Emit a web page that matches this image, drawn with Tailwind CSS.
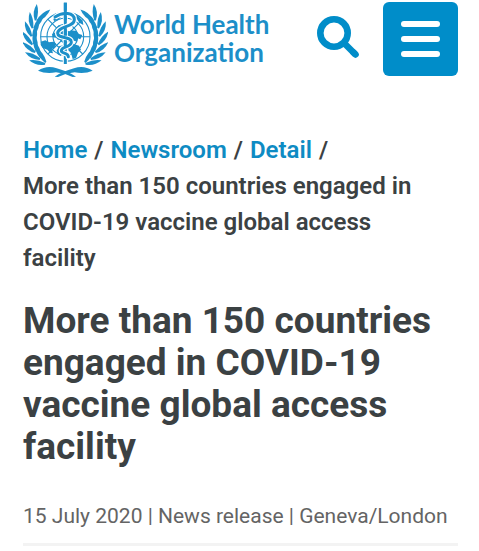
<!DOCTYPE html>
<html lang="en">
<head>
<meta charset="utf-8">
<meta name="viewport" content="width=device-width, initial-scale=1">
<title>More than 150 countries engaged in COVID-19 vaccine global access facility</title>
<script src="https://cdn.jsdelivr.net/npm/@tailwindcss/browser@4"></script>
</head>
<body class="bg-white font-['Roboto',sans-serif] text-[#3b4143]">
<header class="flex items-start pl-[23px] pr-[21px] pt-0.5">
  <a href="#" class="flex items-start gap-1.5 text-[#1c8fc9]">
    <svg class="h-[75px] w-[85px] shrink-0" viewBox="23 5 255 225" fill="none" stroke="currentColor" aria-hidden="true">
      <defs>
        <g id="leaf" fill="currentColor" stroke="none">
          <path d="M47 122Q25 106 24 78Q43 92 51 119Z"/>
          <path d="M51 119Q49 88 66 68Q72 94 56 119Z"/>
        </g>
        <g id="branch">
          <use href="#leaf" transform="rotate(35 150 109)"/>
          <use href="#leaf" transform="rotate(21 150 109)"/>
          <use href="#leaf" transform="rotate(7 150 109)"/>
          <use href="#leaf" transform="rotate(-7 150 109)"/>
          <use href="#leaf" transform="rotate(-21 150 109)"/>
          <use href="#leaf" transform="rotate(-35 150 109)"/>
          <use href="#leaf" transform="rotate(-47 150 109)"/>
          <path fill="currentColor" stroke="none" d="M68 211Q95 193 124 204Q158 213 182 229L172 230Q148 218 122 216Q92 222 68 211Z"/>
        </g>
      </defs>
      <use href="#branch"/>
      <use href="#branch" transform="translate(300 0) scale(-1 1)"/>
      <g stroke-width="3.2">
        <circle cx="150" cy="109" r="74"/>
        <circle cx="150" cy="109" r="55"/>
        <circle cx="150" cy="109" r="37"/>
        <circle cx="150" cy="109" r="18"/>
        <path d="M76 109H224M98 57L202 161M98 161L202 57"/>
      </g>
      <g fill="currentColor" stroke="none">
        <path d="M76 124l14-4 10 6 14-2 9 7-6 11-8 4 4 13-9-2-8-9-14-5-6-9z"/>
        <path d="M110 101l12-6 8 3 6-12-12-4 7-8 12 7 4 20-3 18-16-1-6-6-10-2z"/>
        <path d="M157 96l11-6 15 2 8 9 10 3-6 13-8-3-2 10-9-3-7 8-13-6z"/>
        <path d="M160 138l15-7 16 5 6 12-9 9-6 17-10 2-5-18-8-8z"/>
        <path d="M131 138l12-3 1 21-8 11-9-5-3-11z"/>
        <path d="M114 56l20-17 8 2-12 18-14 3z"/>
        <path d="M183 41l19 20 2 13-12-7-9-14z"/>
      </g>
      <path stroke="#fff" stroke-width="15" d="M150 10V191"/>
      <path stroke-width="9" d="M150 7V191"/>
      <g stroke-linecap="round">
        <path stroke="#fff" stroke-width="16" d="M123 48C143 33 177 37 177 58C177 81 127 77 127 99C127 116 168 107 168 125C168 142 138 137 138 151C138 160 159 157 159 169"/>
        <path stroke-width="9" d="M119 50C143 33 177 37 177 58C177 81 127 77 127 99C127 116 168 107 168 125C168 142 138 137 138 151C138 160 159 157 159 169"/>
      </g>
      <path stroke-width="9" d="M150 7V60M150 82V106M150 120V137"/>
    </svg>
    <span class="pt-2 font-['Lato',sans-serif] text-[26px] leading-7 font-bold">World Health<br>Organization</span>
  </a>
  <button type="button" aria-label="Search" class="mt-3.5 ml-auto text-[#008dc9]">
    <svg class="size-[42px]" viewBox="0 0 42 42" fill="none" stroke="currentColor" aria-hidden="true">
      <circle cx="17" cy="17" r="13.7" stroke-width="6.6"/>
      <path d="M27 27L38.5 38.5" stroke-width="6.6"/>
      <path d="M36.5 36.5L38.5 38.5" stroke-width="6.6" stroke-linecap="round"/>
    </svg>
  </button>
  <button type="button" aria-label="Menu" class="ml-6 flex h-[74px] w-[75px] shrink-0 flex-col items-center justify-center gap-[9px] rounded-md bg-[#008dc9]">
    <span class="h-1.5 w-[39px] rounded-full bg-white"></span>
    <span class="h-1.5 w-[39px] rounded-full bg-white"></span>
    <span class="h-1.5 w-[39px] rounded-full bg-white"></span>
  </button>
</header>
<main class="pl-[23px] pr-[21px] pt-[55px]">
  <nav aria-label="Breadcrumb" class="text-[24px] leading-9 font-semibold">
    <ol class="flex flex-wrap gap-x-[7px]">
      <li><a href="#" class="text-[#0e8bc3]">Home</a></li><li aria-hidden="true">/</li>
      <li><a href="#" class="text-[#0e8bc3]">Newsroom</a></li><li aria-hidden="true">/</li>
      <li><a href="#" class="text-[#0e8bc3]">Detail</a></li><li aria-hidden="true">/</li>
      <li class="pr-6">More than 150 countries engaged in COVID-19 vaccine global access facility</li>
    </ol>
  </nav>
  <h1 class="mt-6 text-[37px] leading-[42px] font-bold">More than 150 countries engaged in COVID-19 vaccine global access facility</h1>
  <p class="mt-8 border-b-3 border-[#f3f3f3] pb-[11px] text-[21px] leading-8 text-[#646464]">15 July 2020 | News release | Geneva/London</p>
</main>
</body>
</html>
